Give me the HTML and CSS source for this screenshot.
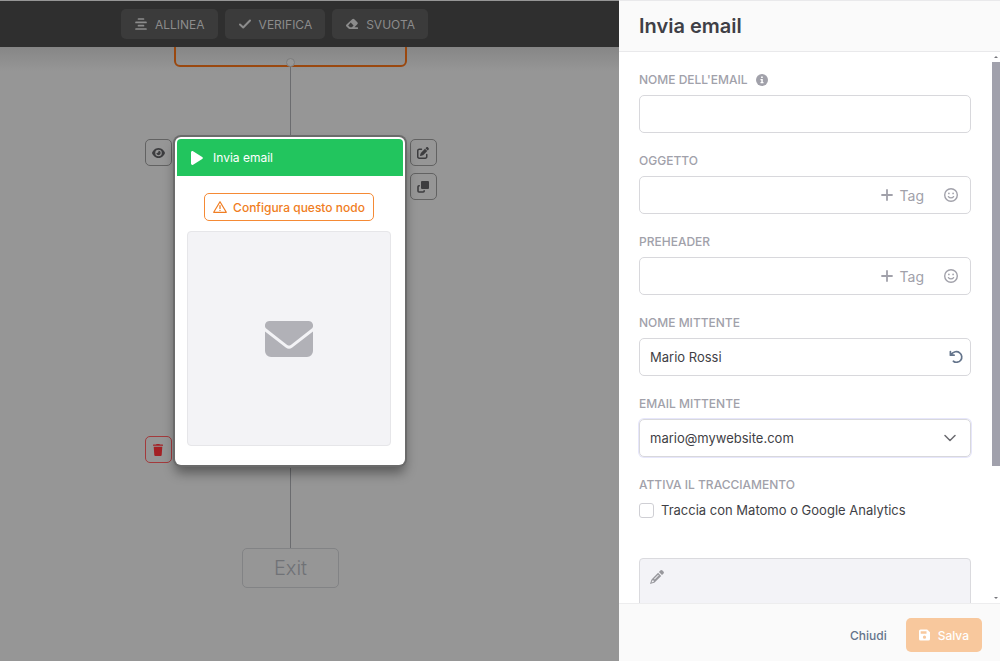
FILE: index.html
```html
<!DOCTYPE html>
<html lang="it">
<head>
  <meta charset="UTF-8" />
  <meta name="viewport" content="width=device-width, initial-scale=1.0" />
  <title>Invia email</title>
  <link rel="stylesheet" href="styles.css">
</head>
<body>
  <main class="editor">
    <header class="toolbar">
      <button class="tool-btn" type="button">
        <svg width="12" height="12" viewBox="0 0 12 12" stroke="currentColor" stroke-width="1.700" stroke-linecap="round"><path d="M3.500 1h5M1 4.400h10M3.500 7.700h5M1 11h10"/></svg>
        ALLINEA
      </button>
      <button class="tool-btn" type="button">
        <svg width="12" height="12" viewBox="0 0 12 12" fill="none" stroke="currentColor" stroke-width="2" stroke-linecap="round" stroke-linejoin="round"><path d="M1 6.500 4.200 9.500 11 2.500"/></svg>
        VERIFICA
      </button>
      <button class="tool-btn" type="button">
        <svg width="12" height="12" viewBox="0 0 12 12" fill="currentColor"><path fill-rule="evenodd" d="M6.200 1.200a1.500 1.500 0 0 1 2.100 0l3 3a1.500 1.500 0 0 1 0 2.100L8.500 9.200h2.800a.9.900 0 0 1 0 1.800H3.600a1.500 1.500 0 0 1-1.100-.5L.5 8.500a1.500 1.500 0 0 1 0-2.100zM5.900 9.200l1.700-1.700-2.900-2.900-2.500 2.800 1.800 1.800z"/></svg>
        SVUOTA
      </button>
    </header>

    <div class="canvas">
      <div class="node node-prev"></div>
      <div class="edge edge-in"></div>
      <div class="edge edge-out"></div>
      <span class="port"></span>

      <button class="node-btn btn-view" type="button" aria-label="Anteprima">
        <svg width="13" height="12" viewBox="0 0 576 512" fill="currentColor"><path fill-rule="evenodd" d="M288 32c-80.800 0-145.500 36.800-192.600 80.600C48.600 156 17.300 208 2.500 243.700c-3.300 7.900-3.300 16.700 0 24.600C17.300 304 48.600 356 95.400 399.400 142.500 443.200 207.200 480 288 480s145.500-36.800 192.600-80.600c46.800-43.500 78.100-95.400 93-131.100 3.300-7.900 3.300-16.700 0-24.600-14.900-35.700-46.200-87.700-93-131.100C433.500 68.800 368.800 32 288 32zM144 256a144 144 0 1 1 288 0 144 144 0 1 1-288 0zm144-64c0 35.300-28.700 64-64 64-7.100 0-13.900-1.200-20.300-3.300-5.500-1.800-11.900 1.600-11.700 7.400a97 97 0 1 0 103.200-99.300c-5.800-.3-9.200 6.100-7.400 11.700 2.100 6.400 3.300 13.200 3.300 20.300z"/></svg>
      </button>
      <button class="node-btn btn-edit" type="button" aria-label="Modifica">
        <svg width="12" height="12" viewBox="0 0 512 512" fill="currentColor"><path d="M471.600 21.700c-21.900-21.900-57.300-21.900-79.200 0L362.300 51.700l97.900 97.900 30.100-30.100c21.900-21.900 21.900-57.300 0-79.200zM172.400 241.700c-6.100 6.100-10.800 13.600-13.500 21.900l-29.600 88.800c-2.900 8.600-.6 18.100 5.800 24.600s15.900 8.700 24.600 5.800l88.800-29.600c8.200-2.700 15.700-7.400 21.900-13.500l167.300-167.400-98-98zM96 64c-53 0-96 43-96 96v256c0 53 43 96 96 96h256c53 0 96-43 96-96v-96c0-17.700-14.300-32-32-32s-32 14.300-32 32v96c0 17.700-14.300 32-32 32H96c-17.700 0-32-14.300-32-32V160c0-17.700 14.300-32 32-32h96c17.700 0 32-14.300 32-32s-14.300-32-32-32z"/></svg>
      </button>
      <button class="node-btn btn-copy" type="button" aria-label="Duplica">
        <svg width="12" height="12" viewBox="0 0 12 12"><rect x="4" y="0" width="8" height="8" rx="1" fill="currentColor"/><path d="M2.800 4.800H2a1 1 0 0 0-1 1V10a1 1 0 0 0 1 1h4.200a1 1 0 0 0 1-1v-.8" fill="none" stroke="currentColor" stroke-width="1.600"/></svg>
      </button>
      <button class="node-btn btn-delete" type="button" aria-label="Elimina">
        <svg width="10" height="12" viewBox="0 0 10 12" fill="currentColor"><path d="M3.200.4 3.500 0h3l.3.400H9.500a.5.500 0 0 1 .5.500v.9H0V.9A.5.500 0 0 1 .5.400zM.7 2.700h8.600l-.6 8.200a1.100 1.100 0 0 1-1.100 1.100H2.400a1.100 1.100 0 0 1-1.100-1.100z"/></svg>
      </button>

      <article class="node node-email">
        <div class="node-head">
          <svg width="12" height="14" viewBox="0 0 12 14" fill="currentColor"><path d="M0 1.400C0 .3 1.200-.3 2.100.2l9.100 5.700c.9.600.9 1.700 0 2.200l-9.100 5.700c-.9.500-2.100-.1-2.100-1.200z"/></svg>
          <span>Invia email</span>
        </div>
        <div class="node-body">
          <button class="configure" type="button">
            <svg width="14" height="12" viewBox="0 0 14 12" fill="none" stroke="currentColor" stroke-linejoin="round" stroke-linecap="round"><path stroke-width="1.200" d="M7 .7 13.300 11.300H.7z"/><path stroke-width="1.300" d="M7 4.600v2.800M7 9.300v.1"/></svg>
            Configura questo nodo
          </button>
          <div class="preview">
            <svg width="48" height="36" viewBox="0 0 48 36" fill="currentColor"><path d="M4.500 0h39A4.500 4.500 0 0 1 46.200 8.100L25.800 23.900a3 3 0 0 1-3.600 0L1.800 8.100A4.500 4.500 0 0 1 4.500 0zM0 10.500 20.700 26.500a5.500 5.500 0 0 0 6.600 0L48 10.500V30a6 6 0 0 1-6 6H6a6 6 0 0 1-6-6z"/></svg>
          </div>
        </div>
      </article>

      <div class="node node-exit">Exit</div>
    </div>
  </main>

  <aside class="panel">
    <header class="panel-head">
      <h1>Invia email</h1>
    </header>

    <div class="panel-body">
      <form class="form" id="emailForm">
        <div class="field">
          <label for="emailName">NOME DELL'EMAIL
            <svg class="info" width="12" height="12" viewBox="0 0 12 12"><circle cx="6" cy="6" r="6" fill="currentColor"/><path d="M5.100 2.500h1.700v1.500H5.100zM4.500 5h2.300v3h.7v1.200h-3V8h.8V6.200h-.8z" fill="#fff"/></svg>
          </label>
          <div class="control"><input id="emailName" type="text" /></div>
        </div>

        <div class="field">
          <label for="subject">OGGETTO</label>
          <div class="control">
            <input id="subject" type="text" />
            <button class="tag-btn" type="button">
              <svg width="12" height="12" viewBox="0 0 12 12" stroke="currentColor" stroke-width="1.800" stroke-linecap="round"><path d="M6 1v10M1 6h10"/></svg>
              Tag
            </button>
            <button class="emoji-btn" type="button" aria-label="Emoji">
              <svg width="14" height="14" viewBox="0 0 14 14" fill="none" stroke="currentColor" stroke-linecap="round"><circle cx="7" cy="7" r="6.300" stroke-width="1.400"/><path stroke-width="1.300" d="M4.400 8.600c1.300 1.700 3.900 1.700 5.200 0"/><path stroke-width="1.700" d="M4.900 5.400v.1M9.100 5.400v.1"/></svg>
            </button>
          </div>
        </div>

        <div class="field">
          <label for="preheader">PREHEADER</label>
          <div class="control">
            <input id="preheader" type="text" />
            <button class="tag-btn" type="button">
              <svg width="12" height="12" viewBox="0 0 12 12" stroke="currentColor" stroke-width="1.800" stroke-linecap="round"><path d="M6 1v10M1 6h10"/></svg>
              Tag
            </button>
            <button class="emoji-btn" type="button" aria-label="Emoji">
              <svg width="14" height="14" viewBox="0 0 14 14" fill="none" stroke="currentColor" stroke-linecap="round"><circle cx="7" cy="7" r="6.300" stroke-width="1.400"/><path stroke-width="1.300" d="M4.400 8.600c1.300 1.700 3.900 1.700 5.200 0"/><path stroke-width="1.700" d="M4.900 5.400v.1M9.100 5.400v.1"/></svg>
            </button>
          </div>
        </div>

        <div class="field">
          <label for="senderName">NOME MITTENTE</label>
          <div class="control">
            <input id="senderName" type="text" value="Mario Rossi" />
            <button class="reset-btn" type="button" aria-label="Ripristina">
              <svg width="14" height="14" viewBox="0 0 14 14" fill="none" stroke="currentColor" stroke-width="1.700" stroke-linecap="round" stroke-linejoin="round"><path d="M1.400 1.500v3.700h3.700M1.700 5C4.200 1.300 8.200.8 10.700 2.900a5.200 5.200 0 1 1-6.300 8.300"/></svg>
            </button>
          </div>
        </div>

        <div class="field">
          <label for="senderEmail">EMAIL MITTENTE</label>
          <div class="control focused">
            <select id="senderEmail">
              <option>mario@mywebsite.com</option>
            </select>
            <svg class="chevron" width="12" height="8" viewBox="0 0 12 8" fill="none" stroke="currentColor" stroke-width="1.500" stroke-linecap="round" stroke-linejoin="round"><path d="M1 1.500l5 5 5-5"/></svg>
          </div>
        </div>

        <fieldset class="tracking">
          <legend>ATTIVA IL TRACCIAMENTO</legend>
          <input id="tracking" type="checkbox" />
          <label for="tracking">Traccia con Matomo o Google Analytics</label>
        </fieldset>

        <div class="content-box">
          <svg width="14" height="14" viewBox="0 0 14 14" fill="currentColor"><path fill-rule="evenodd" d="M10.300.6a1.600 1.600 0 0 1 2.200 0l.9.900a1.600 1.600 0 0 1 0 2.200l-1.400 1.400L8.900 2zM8.100 2.800l3.100 3.100-6.100 6.100c-.3.300-.6.500-1 .7L0 14l1.300-4.100c.2-.4.400-.7.700-1zM2.300 10.200l-.8 2.300 2.300-.8v-1.300H2.300zm6.500-4.900-.6-.6-4.100 4.100.6.600z"/></svg>
        </div>
      </form>

      <div class="scrollbar" aria-hidden="true">
        <span class="arrow arrow-up"></span>
        <span class="track"><span class="thumb"></span></span>
        <span class="arrow arrow-down"></span>
      </div>
    </div>

    <footer class="panel-foot">
      <button class="btn-close" type="button">Chiudi</button>
      <button class="btn-save" type="submit" form="emailForm">
        <svg width="11" height="12" viewBox="0 0 11 12" fill="currentColor"><path fill-rule="evenodd" d="M1.500.5h6.700l2.800 2.800V10a1.500 1.500 0 0 1-1.500 1.500h-8A1.500 1.500 0 0 1 0 10V2A1.500 1.500 0 0 1 1.500.5zM1.700 2.200V4.800h5.800V2.200zM5.500 6.600a1.600 1.600 0 1 0 0 3.200 1.600 1.600 0 0 0 0-3.200z"/></svg>
        Salva
      </button>
    </footer>
  </aside>
</body>
</html>
```

FILE: styles.css
```css
* {
  box-sizing: border-box;
}
body {
  margin: 0;
  height: 100vh;
  display: flex;
  overflow: hidden;
  font-family: Inter, sans-serif;
  font-size: 13px;
  color: #3f3f46;
}
button, input, select {
  font: inherit;
  color: inherit;
}
button {
  display: flex;
  align-items: center;
  justify-content: center;
  padding: 0;
  border: 0;
  background: none;
  cursor: pointer;
}
svg {
  display: block;
  flex-shrink: 0;
}

/* editor */
.editor {
  flex: 1;
  min-width: 0;
  display: flex;
  flex-direction: column;
  border-top: 1px solid #969696;
  background: #969696;
}
.toolbar {
  display: flex;
  gap: 7px;
  padding: 8px 0 8px 121px;
  background: #2f2f2f;
}
.tool-btn {
  gap: 8px;
  height: 30px;
  padding: 0 13px 0 14px;
  border-radius: 5px;
  background: #3b3b3b;
  color: #8c8c8c;
  font-size: 12px;
}
.canvas {
  position: relative;
  flex: 1;
  overflow: hidden;
  background: linear-gradient(#868686, #969696 24px);
}
.node {
  position: absolute;
}
.node-prev {
  left: 174px;
  top: -20px;
  width: 233px;
  height: 40px;
  border: 2px solid #9a480f;
  border-radius: 6px;
}
.edge {
  position: absolute;
  left: 290px;
  width: 1px;
  background: #6b6c6f;
}
.edge-in {
  top: 20px;
  height: 70px;
}
.edge-out {
  top: 421px;
  height: 80px;
}
.port {
  position: absolute;
  left: 286px;
  top: 11px;
  width: 9px;
  height: 9px;
  border: 1px solid #7d7d7d;
  border-radius: 50%;
  background: #969696;
}
.node-btn {
  position: absolute;
  width: 27px;
  height: 27px;
  padding-right: 1px;
  border: 1px solid #626262;
  border-radius: 5px;
  color: #3d3d3f;
}
.btn-view {
  left: 145px;
  top: 92px;
}
.btn-edit {
  left: 410px;
  top: 92px;
}
.btn-copy {
  left: 410px;
  top: 126px;
}
.btn-delete {
  left: 145px;
  top: 389px;
  border-color: #a33a3c;
  color: #a32024;
}
.node-email {
  left: 175px;
  top: 90px;
  width: 230px;
  padding: 2px;
  border-radius: 6px;
  background: #fff;
  box-shadow: 0 0 0 2px #6b6b6b, 0 8px 12px rgba(0, 0, 0, 0.4);
}
.node-head {
  display: flex;
  align-items: center;
  gap: 10px;
  height: 37px;
  padding: 0 14px;
  border-radius: 4px 4px 0 0;
  background: #22c55e;
  color: #fff;
  font-size: 12px;
}
.node-body {
  display: flex;
  flex-direction: column;
  align-items: center;
  gap: 10px;
  padding: 17px 12px 17px 10px;
}
.configure {
  gap: 6px;
  height: 28px;
  padding: 0 8px;
  border: 1px solid #f58a35;
  border-radius: 5px;
  color: #f07d22;
  font-size: 12px;
  font-weight: 500;
}
.preview {
  display: flex;
  align-items: center;
  justify-content: center;
  align-self: stretch;
  height: 215px;
  border: 1px solid #e6e6e9;
  border-radius: 4px;
  background: #f3f3f6;
  color: #b1b1b7;
}
.node-exit {
  left: 242px;
  top: 501px;
  width: 97px;
  height: 40px;
  border: 1px solid #828385;
  border-radius: 5px;
  color: #707276;
  font-size: 20px;
  font-weight: 300;
  line-height: 38px;
  text-align: center;
}

/* side panel */
.panel {
  display: flex;
  flex-direction: column;
  flex-shrink: 0;
  width: 381px;
  border-top: 1px solid #e9e9eb;
  background: #fff;
}
.panel-head {
  padding: 13px 20px;
  border-bottom: 1px solid #e9e9eb;
  background: #fafafa;
}
h1 {
  margin: 0;
  font-size: 20px;
  font-weight: 600;
  line-height: 24px;
}
.panel-body {
  flex: 1;
  min-height: 0;
  display: flex;
}
.form {
  flex: 1;
  overflow: hidden;
  padding: 20px 21px 0 20px;
}
.field {
  margin-bottom: 20px;
}
.field label, legend {
  display: flex;
  align-items: center;
  gap: 8px;
  padding: 0;
  margin-bottom: 7px;
  color: #a1a1aa;
  font-size: 12px;
  font-weight: 500;
  line-height: 16px;
}
.control {
  display: flex;
  align-items: center;
  position: relative;
  height: 38px;
  border: 1px solid #d8d8dc;
  border-radius: 5px;
}
.control.focused {
  box-shadow: 0 0 0 1px #e6e6fb;
}
.control input, .control select {
  flex: 1;
  min-width: 0;
  height: 100%;
  padding: 0 10px;
  border: 0;
  outline: 0;
  background: transparent;
  appearance: none;
}
.tag-btn {
  gap: 7px;
  color: #a1a1aa;
  font-size: 14px;
}
.emoji-btn {
  margin: 0 12px 0 20px;
  color: #a1a1aa;
}
.reset-btn {
  margin-right: 7px;
  color: #64748b;
}
.chevron {
  position: absolute;
  right: 14px;
  color: #6b6b70;
  pointer-events: none;
}
.tracking {
  display: flex;
  flex-wrap: wrap;
  align-items: center;
  gap: 7px;
  margin: 0 0 38px;
  padding: 0;
  border: 0;
}
.tracking input {
  width: 15px;
  height: 15px;
  margin: 0;
  border: 1px solid #cfcfd4;
  border-radius: 3px;
  appearance: none;
}
.tracking label {
  line-height: 20px;
}
.content-box {
  height: 120px;
  padding: 11px 10px;
  border: 1px solid #dadade;
  border-radius: 4px;
  background: #f3f3f7;
  color: #98989d;
}
.scrollbar {
  display: flex;
  flex-direction: column;
  align-items: center;
  justify-content: space-between;
  width: 8px;
  padding: 4px 0;
}
.arrow {
  border: 2px solid transparent;
}
.arrow-up {
  border-top: 0;
  border-bottom-color: #77777c;
}
.arrow-down {
  border-bottom: 0;
  border-top-color: #77777c;
}
.track {
  flex: 1;
  width: 8px;
  margin: 4px 0;
}
.thumb {
  display: block;
  height: 76%;
  background: #a1a1ac;
}
.panel-foot {
  display: flex;
  align-items: center;
  justify-content: flex-end;
  gap: 19px;
  padding: 14px 18px 9px;
  border-top: 1px solid #ededee;
  background: #fafafa;
  font-size: 12px;
}
.btn-close {
  color: #64748b;
  font-weight: 500;
}
.btn-save {
  gap: 8px;
  height: 34px;
  padding: 0 13px;
  border-radius: 5px;
  background: #f8c89d;
  color: #fff;
  font-weight: 500;
}
```
